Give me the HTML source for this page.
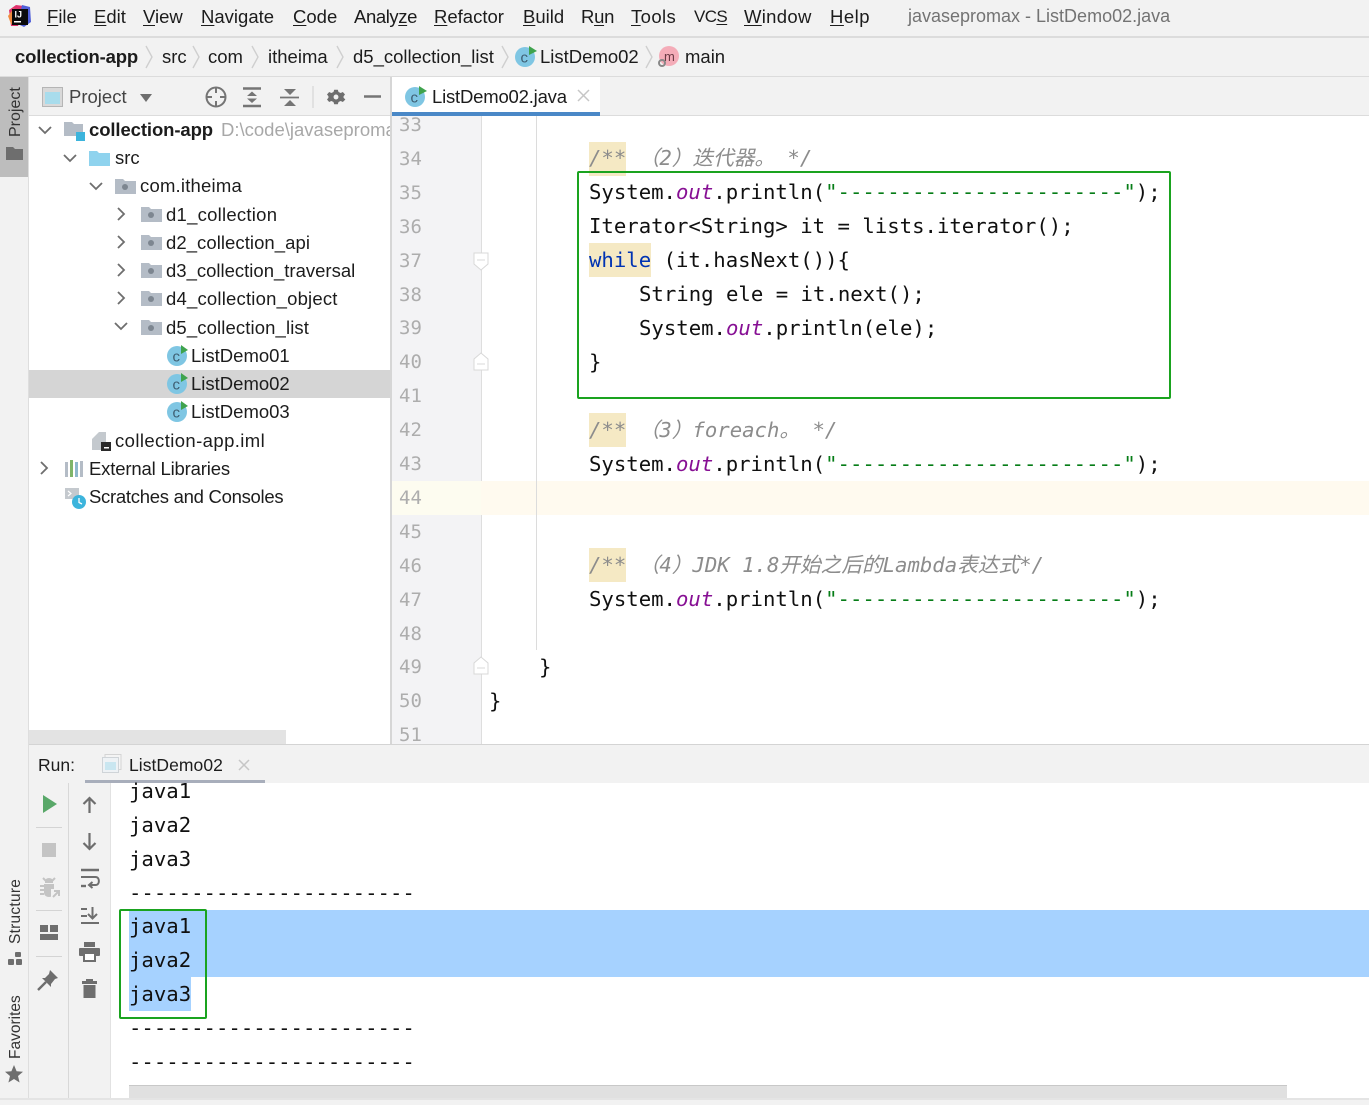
<!DOCTYPE html>
<html><head><meta charset="utf-8"><style>
html,body{margin:0;padding:0}
body{width:1369px;height:1105px;position:relative;overflow:hidden;background:#f2f2f2;font-family:"Liberation Sans","Noto Sans CJK SC",sans-serif;color:#1c1c1c}
.a{position:absolute}
.t{position:absolute;white-space:nowrap;font-size:18.5px;line-height:24px;height:24px}
.m{position:absolute;white-space:pre;font-family:"DejaVu Sans Mono","Noto Sans CJK SC",monospace;font-size:20.65px;line-height:34px;height:34px;color:#101010}
.n{position:absolute;left:399px;width:24px;font-family:"DejaVu Sans Mono",monospace;font-size:19px;line-height:24px;color:#adadad;letter-spacing:.1px}
.c{color:#8c8c8c;font-style:italic}
.o{color:#871094;font-style:italic}
.g{color:#067d17}
.k{color:#0033b3}
.h{background:#f5e9c4}
u{text-decoration:underline;text-underline-offset:2px}
.v{position:absolute;white-space:nowrap;font-size:16px;line-height:20px;transform-origin:0 0;transform:rotate(-90deg);color:#333}
svg{position:absolute;overflow:visible}
</style></head><body>

<!-- menu bar -->
<div class="a" style="left:0;top:36px;width:1369px;height:2px;background:#dcdcdc"></div>
<div class="a" style="left:0;top:76px;width:1369px;height:1px;background:#dcdcdc"></div>
<svg style="left:8px;top:4px" width="24" height="24" viewBox="0 0 24 24"><path d="M1 6L8 1L16 2L10 22L3 22Z" fill="#e0336e"/><path d="M0 12L6 4L8 21L3 20Z" fill="#f08a3c"/><path d="M14 1L22 3L23 18L16 23L10 20Z" fill="#4f5fd8"/><rect x="4" y="5" width="16" height="16" fill="#0a0a0a"/><rect x="6" y="17" width="7" height="1.5" fill="#fff"/><text x="6.5" y="13.5" font-size="9" font-weight="bold" fill="#fff" font-family="Liberation Sans">IJ</text></svg>
<div class="t" style="left:47px;top:5px"><u>F</u>ile</div>
<div class="t" style="left:94px;top:5px"><u>E</u>dit</div>
<div class="t" style="left:143px;top:5px"><u>V</u>iew</div>
<div class="t" style="left:201px;top:5px"><u>N</u>avigate</div>
<div class="t" style="left:293px;top:5px"><u>C</u>ode</div>
<div class="t" style="left:354px;top:5px;letter-spacing:-.4px">Analy<u>z</u>e</div>
<div class="t" style="left:434px;top:5px"><u>R</u>efactor</div>
<div class="t" style="left:523px;top:5px"><u>B</u>uild</div>
<div class="t" style="left:581px;top:5px;letter-spacing:-.3px">R<u>u</u>n</div>
<div class="t" style="left:631px;top:5px;letter-spacing:.4px"><u>T</u>ools</div>
<div class="t" style="left:694px;top:5px;font-size:17px;letter-spacing:-.6px">VC<u>S</u></div>
<div class="t" style="left:744px;top:5px;letter-spacing:.3px"><u>W</u>indow</div>
<div class="t" style="left:830px;top:5px;letter-spacing:.5px"><u>H</u>elp</div>
<div class="t" style="left:908px;top:4px;color:#737373;font-size:18px">javasepromax - ListDemo02.java</div>

<!-- breadcrumb -->
<div class="t" style="left:15px;top:45px;font-weight:bold;letter-spacing:-.17px">collection-app</div>
<div class="t" style="left:162px;top:45px">src</div>
<div class="t" style="left:208px;top:45px">com</div>
<div class="t" style="left:268px;top:45px">itheima</div>
<div class="t" style="left:353px;top:45px">d5_collection_list</div>
<div class="t" style="left:540px;top:45px">ListDemo02</div>
<div class="t" style="left:685px;top:45px">main</div>
<svg style="left:0;top:0" width="700" height="76" fill="none" stroke="#cfcfcf" stroke-width="1.4"><path d="M146 46L152 57L146 68M193 46L199 57L193 68M252 46L258 57L252 68M337 46L343 57L337 68M502 46L508 57L502 68M646 46L652 57L646 68"/></svg>
<svg style="left:515px;top:45px" width="22" height="22"><circle cx="10" cy="12" r="10" fill="#7fc6e3"/><text x="5.5" y="17.5" font-size="15" fill="#3f5f73" font-family="Liberation Sans">c</text><path d="M14 1L22 6L14 10Z" fill="#3fa34d"/></svg>
<svg style="left:659px;top:46px" width="22" height="22"><circle cx="10" cy="10" r="10" fill="#f4acb8"/><text x="5" y="15" font-size="13" fill="#6a3a44" font-family="Liberation Sans">m</text><circle cx="3" cy="17" r="3" fill="none" stroke="#888" stroke-width="2"/></svg>

<!-- left strip -->
<div class="a" style="left:0;top:77px;width:28px;height:100px;background:#bdbdbd"></div>
<div class="a" style="left:28px;top:77px;width:1px;height:1023px;background:#dedede"></div>
<div class="v" style="left:6px;top:137px;width:52px">Project</div>
<svg style="left:6px;top:146px" width="17" height="14"><path d="M0 1H7L9 3H17V14H0Z" fill="#6e6e6e"/></svg>
<div class="v" style="left:6px;top:944px;font-size:15.5px;letter-spacing:.25px">Structure</div>
<svg style="left:7px;top:951px" width="16" height="16" fill="#6e6e6e"><rect x="8" y="1" width="6" height="5" rx="1"/><rect x="1" y="8" width="6" height="6" rx="1"/><rect x="9" y="8" width="6" height="6" rx="1"/></svg>
<div class="v" style="left:6px;top:1059px;font-size:15.5px">Favorites</div>
<svg style="left:5px;top:1065px" width="18" height="18"><path d="M9 0L11.6 6.2L18 6.8L13 11L14.6 17.5L9 14L3.4 17.5L5 11L0 6.8L6.4 6.2Z" fill="#6e6e6e"/></svg>

<!-- project panel -->
<div class="a" style="left:29px;top:77px;width:361px;height:667px;background:#fff"></div>
<div class="a" style="left:29px;top:77px;width:361px;height:38px;background:#f2f2f2"></div>
<div class="a" style="left:29px;top:115px;width:361px;height:1px;background:#dcdcdc"></div>
<div class="a" style="left:390px;top:77px;width:2px;height:667px;background:#d6d6d6"></div>
<svg style="left:42px;top:87px" width="21" height="20"><rect x="0.5" y="0.5" width="20" height="19" fill="#d9d9d9" stroke="#b5b5b5"/><rect x="3" y="5" width="15" height="12" fill="#a8dcec"/></svg>
<div class="t" style="left:69px;top:85px;color:#444">Project</div>
<svg style="left:140px;top:94px" width="12" height="8"><path d="M0 0H12L6 8Z" fill="#6e6e6e"/></svg>
<svg style="left:205px;top:86px" width="180" height="22" fill="none" stroke="#757575" stroke-width="2"><circle cx="11" cy="11" r="9.5"/><path d="M11 2V7M11 15V20M2 11H7M15 11H20"/><path d="M38 2.5H56M38 20H56" stroke-width="2.6"/><path d="M47 5.5L42 10H52ZM47 17L42 12.5H52Z" fill="#757575" stroke="none"/><path d="M75 11.5H94" stroke-width="1.8"/><path d="M79 3H91L85 9ZM85 14L91 20H79Z" fill="#757575" stroke="none"/><path d="M108 0V22" stroke="#d0d0d0" stroke-width="1"/><g transform="translate(131 11) scale(.72) translate(-131.5 -11)"><path d="M129 1H134L135 4L138 5.4L141 4L144 7.5L142 10V12L144.5 14.5L141 18L138 16.6L135 18L134 21H129L128 18L125 16.6L122 18L119 14.5L121 12V10L119 7.5L122 4L125 5.4L128 4Z" fill="#6e6e6e" stroke="none"/><circle cx="131.5" cy="11" r="3.4" fill="#f2f2f2" stroke="none"/></g><path d="M159 10.5H176" stroke-width="2.4"/></svg>

<!-- tree chevrons -->
<svg style="left:0;top:0" width="140" height="480" fill="none" stroke="#6e6e6e" stroke-width="1.8"><path d="M39 127L45 133L51 127M64 155L70 161L76 155M90 183L96 189L102 183M118 208L124 214L118 220M118 236L124 242L118 248M118 264L124 270L118 276M118 292L124 298L118 304M115 323L121 329L127 323M41 462L47 468L41 474"/></svg>

<svg style="left:64px;top:121px" width="22" height="20"><path d="M0 1H8L10 3H19V15H0Z" fill="#b4bcc6"/><rect x="12" y="11" width="9" height="9" fill="#3cb4dc"/></svg>
<div class="t" style="left:89px;top:118px;font-weight:bold;letter-spacing:-.1px">collection-app</div>
<div class="t" style="left:221px;top:118px;color:#a8a8a8;width:169px;overflow:hidden">D:\code\javasepromax</div>
<svg style="left:89px;top:151px" width="21" height="15"><path d="M0 0H8L10 2H21V15H0Z" fill="#8fd3ee"/></svg>
<div class="t" style="left:115px;top:146px">src</div>
<svg style="left:115px;top:179px" width="21" height="15"><path d="M0 0H8L10 2H21V15H0Z" fill="#b4bcc6"/><rect x="7" y="5" width="6" height="6" rx="3" fill="#7d8690"/></svg>
<div class="t" style="left:140px;top:174px;letter-spacing:.2px">com.itheima</div>
<svg style="left:141px;top:207px" width="21" height="15"><path d="M0 0H8L10 2H21V15H0Z" fill="#b4bcc6"/><rect x="7" y="5" width="6" height="6" rx="3" fill="#7d8690"/></svg>
<div class="t" style="left:166px;top:203px;letter-spacing:.25px">d1_collection</div>
<svg style="left:141px;top:235px" width="21" height="15"><path d="M0 0H8L10 2H21V15H0Z" fill="#b4bcc6"/><rect x="7" y="5" width="6" height="6" rx="3" fill="#7d8690"/></svg>
<div class="t" style="left:166px;top:231px;letter-spacing:.06px">d2_collection_api</div>
<svg style="left:141px;top:263px" width="21" height="15"><path d="M0 0H8L10 2H21V15H0Z" fill="#b4bcc6"/><rect x="7" y="5" width="6" height="6" rx="3" fill="#7d8690"/></svg>
<div class="t" style="left:166px;top:259px">d3_collection_traversal</div>
<svg style="left:141px;top:291px" width="21" height="15"><path d="M0 0H8L10 2H21V15H0Z" fill="#b4bcc6"/><rect x="7" y="5" width="6" height="6" rx="3" fill="#7d8690"/></svg>
<div class="t" style="left:166px;top:287px;letter-spacing:.2px">d4_collection_object</div>
<svg style="left:141px;top:320px" width="21" height="15"><path d="M0 0H8L10 2H21V15H0Z" fill="#b4bcc6"/><rect x="7" y="5" width="6" height="6" rx="3" fill="#7d8690"/></svg>
<div class="t" style="left:166px;top:316px;letter-spacing:.12px">d5_collection_list</div>

<div class="a" style="left:29px;top:370px;width:361px;height:28px;background:#d5d5d5"></div>
<svg style="left:167px;top:345px" width="22" height="22"><circle cx="10" cy="11" r="10" fill="#7fc6e3"/><text x="5.5" y="16.5" font-size="15" fill="#3f5f73" font-family="Liberation Sans">c</text><path d="M14 0L21 5L14 9Z" fill="#3fa34d"/></svg>
<div class="t" style="left:191px;top:344px">ListDemo01</div>
<svg style="left:167px;top:373px" width="22" height="22"><circle cx="10" cy="11" r="10" fill="#7fc6e3"/><text x="5.5" y="16.5" font-size="15" fill="#3f5f73" font-family="Liberation Sans">c</text><path d="M14 0L21 5L14 9Z" fill="#3fa34d"/></svg>
<div class="t" style="left:191px;top:372px">ListDemo02</div>
<svg style="left:167px;top:401px" width="22" height="22"><circle cx="10" cy="11" r="10" fill="#7fc6e3"/><text x="5.5" y="16.5" font-size="15" fill="#3f5f73" font-family="Liberation Sans">c</text><path d="M14 0L21 5L14 9Z" fill="#3fa34d"/></svg>
<div class="t" style="left:191px;top:400px">ListDemo03</div>
<svg style="left:92px;top:431px" width="20" height="20"><path d="M0 8L7 1H14V19H0Z" fill="#c4c9ce"/><rect x="9" y="11" width="10" height="9" fill="#2a2a2a"/><rect x="12" y="16" width="5" height="1.5" fill="#fff"/></svg>
<div class="t" style="left:115px;top:429px;letter-spacing:.4px">collection-app.iml</div>
<svg style="left:64px;top:460px" width="22" height="18"><rect x="1" y="2" width="3" height="15" fill="#b4bcc6"/><rect x="6" y="0" width="3" height="17" fill="#7fb56a"/><rect x="11" y="2" width="3" height="15" fill="#8fb8cc"/><rect x="16" y="1" width="3" height="16" fill="#b4bcc6"/></svg>
<div class="t" style="left:89px;top:457px;letter-spacing:-.17px">External Libraries</div>
<svg style="left:64px;top:487px" width="24" height="22"><path d="M1 1H15V12H1Z" fill="#c4c9ce"/><path d="M4 4L7 6.5L4 9" stroke="#fff" stroke-width="1.2" fill="none"/><circle cx="15" cy="15" r="7" fill="#3cb4dc"/><path d="M15 11V15.5L18 17" stroke="#fff" stroke-width="1.3" fill="none"/></svg>
<div class="t" style="left:89px;top:485px;letter-spacing:-.28px">Scratches and Consoles</div>
<div class="a" style="left:29px;top:730px;width:257px;height:14px;background:#e3e3e3"></div>

<!-- editor tabs -->
<div class="a" style="left:392px;top:77px;width:977px;height:38px;background:#f2f2f2"></div>
<div class="a" style="left:392px;top:77px;width:208px;height:35px;background:#fff"></div>
<div class="a" style="left:392px;top:112px;width:208px;height:4px;background:#4a88c7"></div>
<div class="a" style="left:600px;top:115px;width:769px;height:1px;background:#dcdcdc"></div>
<svg style="left:405px;top:85px" width="22" height="22"><circle cx="10" cy="12" r="10" fill="#7fc6e3"/><text x="5.5" y="17.5" font-size="15" fill="#3f5f73" font-family="Liberation Sans">c</text><path d="M14 1L22 6L14 10Z" fill="#3fa34d"/></svg>
<div class="t" style="left:432px;top:85px;letter-spacing:-.2px">ListDemo02.java</div>
<svg style="left:578px;top:90px" width="11" height="11" stroke="#c6c6c6" stroke-width="1.5"><path d="M0 0L11 11M11 0L0 11"/></svg>

<!-- editor -->
<div class="a" style="left:392px;top:116px;width:977px;height:628px;background:#fff"></div>
<div class="a" style="left:392px;top:116px;width:89px;height:628px;background:#f3f3f5"></div>
<div class="a" style="left:481px;top:116px;width:1px;height:628px;background:#dedede"></div>
<div class="a" style="left:392px;top:481px;width:89px;height:34px;background:#fdfcf0"></div>
<div class="a" style="left:481px;top:481px;width:888px;height:34px;background:#fffaef"></div>
<div class="a" style="left:536px;top:116px;width:1px;height:534px;background:#dcdcdc"></div>

<div class="n" style="top:113px">33</div>
<div class="n" style="top:147px">34</div>
<div class="n" style="top:181px">35</div>
<div class="n" style="top:215px">36</div>
<div class="n" style="top:249px">37</div>
<div class="n" style="top:283px">38</div>
<div class="n" style="top:316px">39</div>
<div class="n" style="top:350px">40</div>
<div class="n" style="top:384px">41</div>
<div class="n" style="top:418px">42</div>
<div class="n" style="top:452px">43</div>
<div class="n" style="top:486px">44</div>
<div class="n" style="top:520px">45</div>
<div class="n" style="top:554px">46</div>
<div class="n" style="top:588px">47</div>
<div class="n" style="top:622px">48</div>
<div class="n" style="top:655px">49</div>
<div class="n" style="top:689px">50</div>
<div class="n" style="top:723px">51</div>

<svg style="left:473px;top:252px" width="16" height="20" fill="#fff" stroke="#d8d8d8"><path d="M1 1H15V12L8 18L1 12Z"/><path d="M4 8H12"/></svg>
<svg style="left:473px;top:352px" width="16" height="20" fill="#fff" stroke="#d8d8d8"><path d="M1 18H15V7L8 1L1 7Z"/><path d="M4 12H12"/></svg>
<svg style="left:473px;top:656px" width="16" height="20" fill="#fff" stroke="#d8d8d8"><path d="M1 18H15V7L8 1L1 7Z"/><path d="M4 12H12"/></svg>

<div class="a h" style="left:589px;top:142px;width:37px;height:34px"></div>
<div class="a h" style="left:589px;top:243px;width:62px;height:34px"></div>
<div class="a h" style="left:589px;top:413px;width:37px;height:34px"></div>
<div class="a h" style="left:589px;top:548px;width:37px;height:34px"></div>

<div class="m c" style="left:589px;top:141px">/** （2）迭代器。 */</div>
<div class="m" style="left:589px;top:175px">System.<span class="o">out</span>.println(<span class="g">"-----------------------"</span>);</div>
<div class="m" style="left:589px;top:209px">Iterator&lt;String&gt; it = lists.iterator();</div>
<div class="m" style="left:589px;top:243px"><span class="k">while</span> (it.hasNext()){</div>
<div class="m" style="left:639px;top:277px">String ele = it.next();</div>
<div class="m" style="left:639px;top:311px">System.<span class="o">out</span>.println(ele);</div>
<div class="m" style="left:589px;top:345px">}</div>
<div class="m c" style="left:589px;top:413px">/** （3）foreach。 */</div>
<div class="m" style="left:589px;top:447px">System.<span class="o">out</span>.println(<span class="g">"-----------------------"</span>);</div>
<div class="m c" style="left:589px;top:548px">/** （4）JDK 1.8开始之后的Lambda表达式*/</div>
<div class="m" style="left:589px;top:582px">System.<span class="o">out</span>.println(<span class="g">"-----------------------"</span>);</div>
<div class="m" style="left:539px;top:650px">}</div>
<div class="m" style="left:489px;top:684px">}</div>

<div class="a" style="left:577px;top:171px;width:590px;height:224px;border:2px solid #1aa31f;border-radius:2px"></div>

<!-- run panel -->
<div class="a" style="left:29px;top:744px;width:1340px;height:1px;background:#d4d4d4"></div>
<div class="t" style="left:38px;top:753px;font-size:17.5px">Run:</div>
<svg style="left:102px;top:754px" width="20" height="20"><rect x="3" y="0.5" width="16" height="15" fill="#f4f4f4" stroke="#d4d4d4"/><rect x="0.5" y="3.5" width="16" height="15" fill="#eef2f5" stroke="#cfd4d8"/><rect x="3" y="8" width="11" height="8" fill="#c9e6f0"/></svg>
<div class="t" style="left:129px;top:753px;font-size:17.5px;letter-spacing:.05px">ListDemo02</div>
<svg style="left:239px;top:760px" width="10" height="10" stroke="#c6c6c6" stroke-width="1.5"><path d="M0 0L10 10M10 0L0 10"/></svg>
<div class="a" style="left:85px;top:780px;width:180px;height:3px;background:#a8aebb"></div>

<div class="a" style="left:111px;top:783px;width:1258px;height:317px;background:#fff"></div>
<div class="a" style="left:68px;top:783px;width:1px;height:317px;background:#d8d8d8"></div>
<div class="a" style="left:110px;top:783px;width:1px;height:317px;background:#e2e2e2"></div>
<div class="a" style="left:36px;top:827px;width:26px;height:1px;background:#d4d4d4"></div>
<div class="a" style="left:36px;top:910px;width:26px;height:1px;background:#d4d4d4"></div>
<div class="a" style="left:36px;top:956px;width:26px;height:1px;background:#d4d4d4"></div>

<svg style="left:43px;top:795px" width="14" height="18"><path d="M0 0L14 9L0 18Z" fill="#59a869"/></svg>
<div class="a" style="left:42px;top:843px;width:14px;height:14px;background:#c4c4c4"></div>
<svg style="left:40px;top:878px" width="21" height="20" fill="#c4c4c4"><path d="M5 3A4 3 0 0 1 13 3L13 5H5Z"/><path d="M4 6H14V15A5 4 0 0 1 4 15Z"/><path d="M0 8H4M0 12H4M0 16H4M3 0L6 3M15 0L12 3" stroke="#c4c4c4" stroke-width="2"/><path d="M11 11H20V20H11Z" fill="#f2f2f2"/><path d="M13 19L19 13M14 13H19V18" fill="none" stroke="#c4c4c4" stroke-width="2"/></svg>
<svg style="left:40px;top:925px" width="18" height="16" fill="#6e6e6e"><rect y="0" width="8" height="7"/><rect x="10" y="0" width="8" height="7"/><rect y="9" width="18" height="6"/></svg>
<svg style="left:38px;top:970px" width="22" height="22" fill="#6e6e6e"><path d="M12 0L20 8L17 9L13 14L13 17L4 8L7 8L11 4Z"/><path d="M8 12L0 20" stroke="#6e6e6e" stroke-width="2.4"/></svg>

<svg style="left:80px;top:794px" width="20" height="210" fill="none" stroke="#6e6e6e" stroke-width="2.2"><path d="M9.5 5V19M3.5 10L9.5 4L15.5 10"/><path d="M9.5 39V54M3.5 49L9.5 55L15.5 49"/><path d="M1 76H19" stroke-width="2.4"/><path d="M1 83H15.5C20 83 20 91 15.5 91H10M12.5 88L9 91L12.5 94" stroke-width="2"/><path d="M1 92H6" stroke-width="2.4"/><path d="M12.5 113V124M8 120L12.5 124.5L17 120M1 115H7M1 122H7M1 129H19" stroke-width="2"/></svg>
<svg style="left:79px;top:942px" width="21" height="20"><rect x="5" y="0" width="11" height="5" fill="#6e6e6e"/><rect x="0" y="6" width="21" height="8" rx="1" fill="#6e6e6e"/><rect x="5" y="11" width="11" height="8" fill="#fff" stroke="#6e6e6e" stroke-width="2"/></svg>
<svg style="left:82px;top:979px" width="15" height="19" fill="#6e6e6e"><rect x="4" y="0" width="7" height="2"/><rect x="0" y="2" width="15" height="3"/><path d="M1.5 6H13.5V19H1.5Z"/></svg>

<div class="a" style="left:129px;top:910px;width:1240px;height:67px;background:#a6d2ff"></div>
<div class="a" style="left:129px;top:977px;width:62px;height:34px;background:#a6d2ff"></div>

<div class="m" style="left:129px;top:774px">java1</div>
<div class="m" style="left:129px;top:808px">java2</div>
<div class="m" style="left:129px;top:842px">java3</div>
<div class="m" style="left:129px;top:876px">-----------------------</div>
<div class="m" style="left:129px;top:909px">java1</div>
<div class="m" style="left:129px;top:943px">java2</div>
<div class="m" style="left:129px;top:977px">java3</div>
<div class="m" style="left:129px;top:1011px">-----------------------</div>
<div class="m" style="left:129px;top:1045px">-----------------------</div>

<div class="a" style="left:119px;top:909px;width:84px;height:106px;border:2px solid #1aa31f;border-radius:2px"></div>

<div class="a" style="left:129px;top:1085px;width:1158px;height:13px;background:#e0e0e0;border-top:1px solid #c8c8c8;box-sizing:border-box"></div>
<div class="a" style="left:0;top:1098px;width:1369px;height:2px;background:#e4e4e4"></div>
<div class="a" style="left:0;top:1100px;width:1369px;height:5px;background:#f2f2f2"></div>
</body></html>
